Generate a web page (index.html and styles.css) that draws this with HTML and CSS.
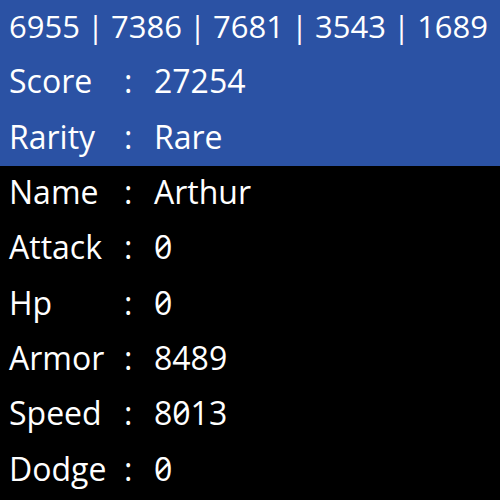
FILE: index.html
```html
<!DOCTYPE html>
<html lang="en">
<head>
    <meta charset="UTF-8">
    <title>Card Stats</title>
    <link rel="stylesheet" href="styles.css">
</head>
<body>
    <div class="card">
        <div class="head">
            <div class="row ids">6955 | 7386 | 7681 | 3543 | 1689</div>
            <div class="row"><span class="label">Score</span><span class="sep">:</span><span class="value">27254</span></div>
            <div class="row"><span class="label">Rarity</span><span class="sep">:</span><span class="value">Rare</span></div>
        </div>
        <div class="stats">
            <div class="row"><span class="label">Name</span><span class="sep">:</span><span class="value">Arthur</span></div>
            <div class="row"><span class="label">Attack</span><span class="sep">:</span><span class="value">0</span></div>
            <div class="row"><span class="label">Hp</span><span class="sep">:</span><span class="value">0</span></div>
            <div class="row"><span class="label">Armor</span><span class="sep">:</span><span class="value">8489</span></div>
            <div class="row"><span class="label">Speed</span><span class="sep">:</span><span class="value">8013</span></div>
            <div class="row"><span class="label">Dodge</span><span class="sep">:</span><span class="value">0</span></div>
        </div>
    </div>
</body>
</html>
```

FILE: styles.css
```css
body {
    margin: 0;
    padding: 0;
    background-color: #000;
    color: #fff;
    font-family: 'Open Sans', 'Liberation Sans', sans-serif;
    font-size: 32px;
}
.card {
    width: 500px;
    height: 500px;
    overflow: hidden;
}
.head {
    background-color: #2b52a4;
}
.row {
    display: flex;
    align-items: center;
    height: 55.33px;
    box-sizing: border-box;
    padding-left: 9px;
    padding-bottom: 4px;
    white-space: nowrap;
    font-variant-numeric: slashed-zero;
}
.label {
    width: 115px;
}
.sep {
    width: 30px;
}
.ids {
    font-size: 31px;
    word-spacing: -1px;
}
```
